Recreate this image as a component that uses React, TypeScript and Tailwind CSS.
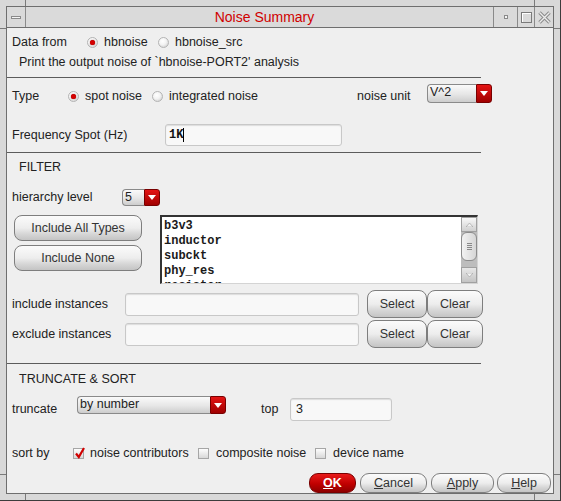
import React from "react";

const sans = "font-['Liberation_Sans',Arial,sans-serif]";
const mono = "font-['Liberation_Mono','Courier_New',monospace]";

function Radio({ on }: { on?: boolean }) {
  return (
    <span className="flex h-[11px] w-[11px] shrink-0 items-center justify-center rounded-full border border-[#b4b4b4] bg-[radial-gradient(circle_at_40%_35%,#ffffff_0%,#f3f3f3_45%,#c6c6c6_100%)]">
      {on && <span className="h-[5px] w-[5px] rounded-full bg-[#d40000] shadow-[0_0_1px_#700000]" />}
    </span>
  );
}

function Check({ on }: { on?: boolean }) {
  return (
    <span className="relative h-[11px] w-[11px] shrink-0 border border-[#a6a6a6] bg-[linear-gradient(#fdfdfd,#d8d8d8)]">
      {on && (
        <svg className="absolute left-[1px] top-[-2px]" width="10" height="12" viewBox="0 0 10 12">
          <path d="M1 6.5 L3.8 10 L9 1" stroke="#d00000" strokeWidth="2.2" fill="none" />
        </svg>
      )}
    </span>
  );
}

function Btn({ cls, children }: { cls: string; children: React.ReactNode }) {
  return (
    <div
      className={`flex shrink-0 items-center justify-center border border-[#7e7e7e] bg-[linear-gradient(#fbfbfb,#ededed_50%,#d6d6d6_75%,#c4c4c4)] text-[#333] ${cls}`}
    >
      {children}
    </div>
  );
}

function Combo({ cls, text }: { cls: string; text: string }) {
  return (
    <div className={`flex shrink-0 ${cls}`}>
      <div className="flex-1 rounded-l-[4px] border border-r-0 border-[#8a8a8a] bg-[linear-gradient(#fafafa,#e6e6e6_55%,#cdcdcd)] pl-[2px] text-[12.5px] leading-[14px] text-[#222]">
        {text}
      </div>
      <div className="flex w-[16px] items-center justify-center rounded-r-[3px] border border-[#780000] bg-[linear-gradient(#e41414,#a00000)]">
        <svg width="8" height="5" viewBox="0 0 8 5">
          <path d="M0 0 H8 L4 5Z" fill="#fff" />
        </svg>
      </div>
    </div>
  );
}

function Field({ cls, children }: { cls: string; children?: React.ReactNode }) {
  return (
    <div
      className={`flex shrink-0 items-center rounded-[3px] border border-[#c8c8c8] bg-[#f8f8f8] shadow-[inset_0_1px_1px_#dcdcdc] ${cls}`}
    >
      {children}
    </div>
  );
}

function Sep({ cls }: { cls: string }) {
  return <div className={`h-px w-[474px] bg-[#5c5c5c] ${cls}`} />;
}

export default function App() {
  return (
    <div className="relative h-[501px] w-[561px] border-b border-r border-[#3c3c3c] bg-[#d8d8d8] p-[6px]">
      {/* frame resize handles */}
      <div className="absolute left-[25px] top-0 h-[6px] w-px bg-[#7a7a7a]" />
      <div className="absolute left-[534px] top-0 h-[6px] w-px bg-[#7a7a7a]" />
      <div className="absolute bottom-0 left-[25px] h-[6px] w-px bg-[#7a7a7a]" />
      <div className="absolute bottom-0 left-[534px] h-[6px] w-px bg-[#7a7a7a]" />
      <div className="absolute left-0 top-[28px] h-px w-[6px] bg-[#7a7a7a]" />
      <div className="absolute left-0 top-[474px] h-px w-[6px] bg-[#7a7a7a]" />
      <div className="absolute right-0 top-[28px] h-px w-[6px] bg-[#7a7a7a]" />
      <div className="absolute right-0 top-[474px] h-px w-[6px] bg-[#7a7a7a]" />

      <div className="flex h-full flex-col border border-[#6e6e6e]">
        {/* title bar */}
        <div className="flex h-[21px] shrink-0 border-b border-[#6e6e6e] bg-[#dadada]">
          <div className="flex w-[19px] items-center justify-center border-r border-[#8a8a8a]">
            <span className="h-[3px] w-[10px] border border-[#8a8a8a] bg-[#f4f4f4]" />
          </div>
          <div className={`flex flex-1 items-center justify-center pl-[10px] text-[14px] text-[#d00000] ${sans}`}>
            Noise Summary
          </div>
          <div className="flex w-[24px] items-center justify-center border-l border-[#8a8a8a]">
            <span className="h-[4px] w-[4px] border border-[#8a8a8a] bg-[#f4f4f4]" />
          </div>
          <div className="flex w-[17px] items-center justify-center border-l border-[#8a8a8a]">
            <span className="h-[11px] w-[11px] border border-[#7a7a7a] shadow-[inset_1px_1px_0_#fff]" />
          </div>
          <div className="flex w-[19px] items-center justify-center border-l border-[#8a8a8a]">
            <svg width="13" height="13" viewBox="0 0 13 13">
              <path d="M1.5 1.5 L11.5 11.5 M11.5 1.5 L1.5 11.5" stroke="#8c8c8c" strokeWidth="3.4" />
              <path d="M1.5 1.5 L11.5 11.5 M11.5 1.5 L1.5 11.5" stroke="#ececec" strokeWidth="1.4" />
            </svg>
          </div>
        </div>

        {/* content */}
        <div className={`flex flex-1 flex-col whitespace-nowrap bg-[#efefef] text-[12.5px] text-[#222] ${sans}`}>
          <div className="mt-[5px] flex h-[18px] items-center pl-[5px]">
            <span className="w-[75px]">Data from</span>
            <Radio on />
            <span className="ml-[6px] w-[54px]">hbnoise</span>
            <Radio />
            <span className="ml-[6px]">hbnoise_src</span>
          </div>
          <div className="mt-[1px] flex h-[20px] items-center pl-[12px]">
            Print the output noise of `hbnoise-PORT2' analysis
          </div>
          <Sep cls="mt-[5px]" />

          <div className="mt-[6px] flex h-[24px] items-center pl-[5px]">
            <span className="w-[56px]">Type</span>
            <Radio on />
            <span className="ml-[6px] w-[67px]">spot noise</span>
            <Radio />
            <span className="ml-[6px] w-[188px]">integrated noise</span>
            <span className="w-[70px]">noise unit</span>
            <Combo cls="mb-[5px] h-[19px] w-[65px]" text="V^2" />
          </div>

          <div className="mt-[16px] flex h-[22px] items-center pl-[5px]">
            <span className="w-[153px]">Frequency Spot (Hz)</span>
            <Field cls="h-[22px] w-[177px] pl-[3px]">
              <span className={`text-[12px] font-bold text-[#111] ${mono}`}>1K</span>
              <span className="h-[14px] w-px bg-black" />
            </Field>
          </div>
          <Sep cls="mt-[6px]" />

          <div className="mt-[6px] flex h-[16px] items-center pl-[12px]">FILTER</div>

          <div className="mt-[13px] flex h-[18px] items-center pl-[5px]">
            <span className="w-[110px]">hierarchy level</span>
            <Combo cls="h-[17px] w-[38px]" text="5" />
          </div>

          <div className="mt-[9px] flex pl-[7px]">
            <div className="flex w-[128px] flex-col gap-[4px]">
              <Btn cls="h-[26px] w-[128px] rounded-[8px]">Include All Types</Btn>
              <Btn cls="h-[26px] w-[128px] rounded-[8px]">Include None</Btn>
            </div>
            <div className="ml-[18px] flex h-[69px] w-[318px] border-b border-l-2 border-r border-t-2 border-b-[#d4d4d4] border-l-[#333] border-r-[#d4d4d4] border-t-[#333] bg-white">
              <div className={`flex-1 overflow-hidden pl-[2px] pt-[2px] text-[12px] font-bold leading-[15px] text-[#1a1a1a] ${mono}`}>
                <div>b3v3</div>
                <div>inductor</div>
                <div>subckt</div>
                <div>phy_res</div>
                <div>resistor</div>
              </div>
              <div className="flex w-[16px] flex-col bg-[#bdbdbd]">
                <div className="flex h-[15px] items-center justify-center border border-[#a0a0a0] bg-[linear-gradient(#f8f8f8,#d0d0d0)]">
                  <svg width="7" height="4" viewBox="0 0 7 4">
                    <path d="M0 4 H7 L3.5 0Z" fill="#f2f2f2" stroke="#9a9a9a" strokeWidth="0.6" />
                  </svg>
                </div>
                <div className="flex h-[29px] items-center justify-center rounded-[6px] border border-[#8c8c8c] bg-[linear-gradient(90deg,#f2f2f2,#d6d6d6)]">
                  <div className="flex w-[5px] flex-col gap-[1px]">
                    <span className="h-px bg-[#888]" />
                    <span className="h-px bg-[#888]" />
                    <span className="h-px bg-[#888]" />
                    <span className="h-px bg-[#888]" />
                  </div>
                </div>
                <div className="flex-1" />
                <div className="flex h-[16px] items-center justify-center border border-[#a0a0a0] bg-[linear-gradient(#e8e8e8,#c4c4c4)]">
                  <svg width="7" height="4" viewBox="0 0 7 4">
                    <path d="M0 0 H7 L3.5 4Z" fill="#f2f2f2" stroke="#9a9a9a" strokeWidth="0.6" />
                  </svg>
                </div>
              </div>
            </div>
          </div>

          <div className="mt-[6px] flex h-[28px] items-center pl-[5px]">
            <span className="w-[113px]">include instances</span>
            <Field cls="h-[23px] w-[234px]" />
            <Btn cls="ml-[8px] h-[28px] w-[60px] rounded-[8px]">Select</Btn>
            <Btn cls="h-[28px] w-[56px] rounded-[8px]">Clear</Btn>
          </div>
          <div className="mt-[2px] flex h-[28px] items-center pl-[5px]">
            <span className="w-[113px]">exclude instances</span>
            <Field cls="h-[23px] w-[234px]" />
            <Btn cls="ml-[8px] h-[28px] w-[60px] rounded-[8px]">Select</Btn>
            <Btn cls="h-[28px] w-[56px] rounded-[8px]">Clear</Btn>
          </div>
          <Sep cls="mt-[15px]" />

          <div className="mt-[7px] flex h-[16px] items-center pl-[12px]">TRUNCATE &amp; SORT</div>

          <div className="mt-[9px] flex h-[26px] items-start pl-[5px]">
            <span className="mt-[5px] w-[65px] leading-[16px]">truncate</span>
            <Combo cls="h-[18px] w-[149px]" text="by number" />
            <span className="ml-[35px] mt-[5px] w-[29px] leading-[16px]">top</span>
            <Field cls="mt-[2px] h-[23px] w-[102px] pl-[5px]">3</Field>
          </div>

          <div className="mt-[23px] flex h-[16px] items-center pl-[5px]">
            <span className="w-[61px]">sort by</span>
            <Check on />
            <span className="ml-[6px] w-[108px]">noise contributors</span>
            <Check />
            <span className="ml-[7px] w-[99px]">composite noise</span>
            <Check />
            <span className="ml-[7px]">device name</span>
          </div>

          <div className="mt-[12px] flex h-[20px] justify-end pr-[2px]">
            <div className="flex h-[20px] w-[47px] items-center justify-center rounded-[9px] border border-[#7a0000] bg-[linear-gradient(#e81a1a,#c00000_55%,#8e0000)] font-bold text-white">
              <span className="underline">O</span>K
            </div>
            <Btn cls="ml-[4px] h-[20px] w-[67px] rounded-[9px]">
              <span className="underline">C</span>ancel
            </Btn>
            <Btn cls="ml-[4px] h-[20px] w-[63px] rounded-[9px]">
              <span className="underline">A</span>pply
            </Btn>
            <Btn cls="ml-[3px] h-[20px] w-[54px] rounded-[9px]">
              <span className="underline">H</span>elp
            </Btn>
          </div>
        </div>
      </div>
    </div>
  );
}
